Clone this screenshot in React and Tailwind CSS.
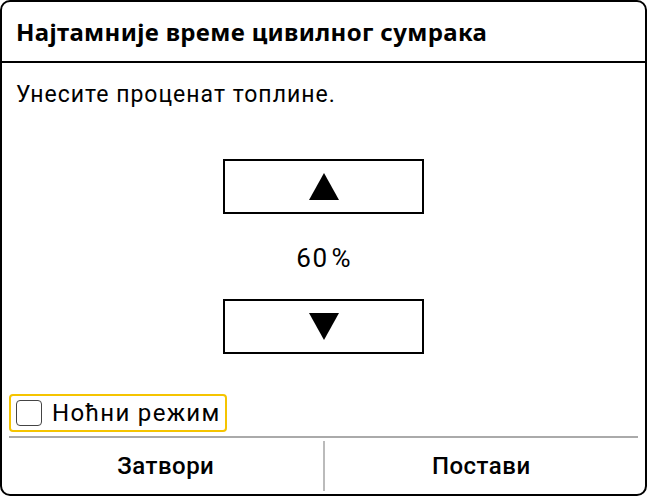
import React from "react";

export default function App() {
  return (
    <div className="w-[647px] h-[496px] bg-white">
      <div className="w-full h-full border-2 border-black rounded-[10px] flex flex-col overflow-hidden font-['Roboto',sans-serif] text-black">
        <div className="h-[61px] border-b-2 border-black flex items-center pl-[14px] shrink-0">
          <span className="text-[24px] font-bold font-['Noto_Sans',sans-serif] leading-none tracking-[0.35px]">
            Најтамније време цивилног сумрака
          </span>
        </div>
        <div className="flex-1 flex flex-col">
          <p className="pl-[14px] pt-[20px] text-[23px] leading-[24px] tracking-[1px]">Унесите проценат топлине.</p>
          <div className="flex flex-col items-center mt-[52px]">
            <button className="w-[201px] h-[55px] border-2 border-black flex items-center justify-center">
              <svg width="30" height="27" viewBox="0 0 30 27"><polygon points="15,0 30,27 0,27" fill="black" /></svg>
            </button>
            <div className="h-[85px] flex items-center justify-center text-[26px] pt-[3px]">
              <span className="tracking-[1.5px]">60</span>
              <span className="ml-[3px]">%</span>
            </div>
            <button className="w-[201px] h-[55px] border-2 border-black flex items-center justify-center">
              <svg width="30" height="27" viewBox="0 0 30 27"><polygon points="0,0 30,0 15,27" fill="black" /></svg>
            </button>
          </div>
          <div className="flex-1" />
          <div className="pl-[7px] pr-[7px]">
            <div className="inline-flex items-center gap-[10px] border-2 border-[#f5c400] rounded-[4px] h-[38px] pl-[5px] pr-[4px]">
              <span className="w-[26px] h-[26px] border-[1.5px] border-[#444] rounded-[4px] shrink-0" />
              <span className="text-[24px] leading-none tracking-[1.3px]">Ноћни режим</span>
            </div>
            <div className="h-[2px] bg-[#aaa] mt-[3px]" />
            <div className="h-[56px] flex">
              <button className="flex-1 flex items-center justify-center text-[24px] font-medium tracking-[0.5px]">Затвори</button>
              <div className="w-[2px] bg-[#bbb] my-[3px]" />
              <button className="flex-1 flex items-center justify-center text-[24px] font-medium tracking-[0.5px]">Постави</button>
            </div>
          </div>
        </div>
      </div>
    </div>
  );
}
